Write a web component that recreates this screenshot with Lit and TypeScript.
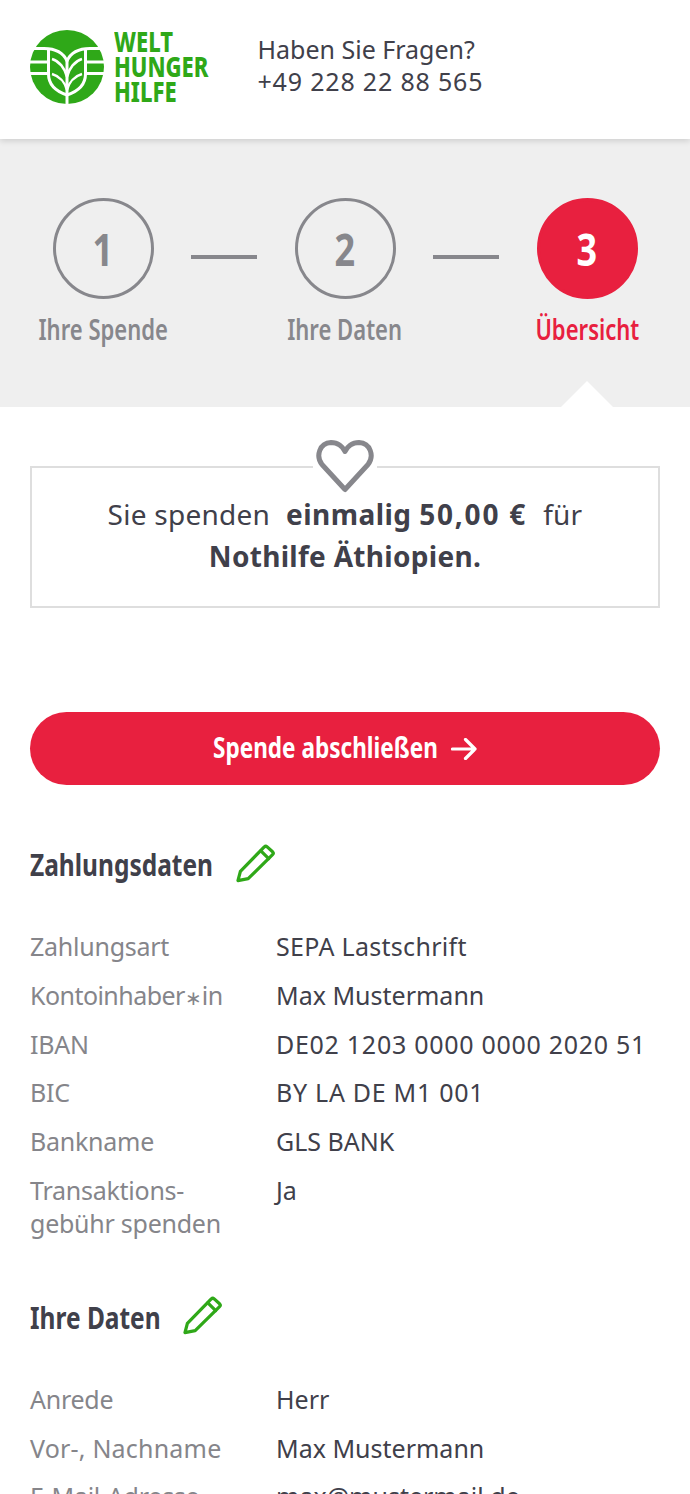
import { LitElement, html, css, svg, TemplateResult } from "lit";
import { customElement } from "lit/decorators.js";

const pencil = html`<svg class="pencil" viewBox="0 0 40 40" fill="none" stroke="#2fa818" stroke-width="3.300" stroke-linejoin="round" stroke-linecap="round">
  <path d="M2 37.500 L4.500 28 L29 3 Q30.500 1.700 32 3 L37.500 8 Q39 9.500 37.500 11 L12.500 35.500 Z"/><path d="M25.500 7 L33.500 15"/>
</svg>`;

const logoMark = svg`
  <circle cx="37" cy="37" r="37" fill="#2fa818"/>
  <g fill="none" stroke="#fff" stroke-width="3">
    <path d="M0 18.500 H14 C24 18.500 33 22 37 31 C41 22 50 18.500 60 18.500 H74"/>
    <path d="M0 32 H18.500 M55.500 32 H74"/>
    <path d="M0 43.500 H18.500 M55.500 43.500 H74"/>
    <path d="M37 74 V30"/>
    <path d="M18.500 18.500 V44 C18.500 56 28 62 37 65 C46 62 55.500 56 55.500 44 V18.500"/>
    <path d="M22 29 C29 31 35 38 37 47 C39 38 45 31 52 29" stroke-width="2.500"/>
    <path d="M22 44 C29 46 35 52 37 60 C39 52 45 46 52 44" stroke-width="2.500"/>
  </g>`;

type Row = [string | TemplateResult, string, string?];

@customElement("app-root")
export class AppRoot extends LitElement {
  static styles = css`
    :host { display: block; width: 690px; height: 1494px; overflow: hidden; background: #fff; font-family: "Noto Sans", sans-serif; color: #40404a; }
    .header { height: 139px; display: flex; align-items: center; padding: 0 0 5px 30px; box-sizing: border-box; box-shadow: 0 2px 6px rgba(0,0,0,.14); position: relative; z-index: 1; background: #fff; }
    .mark { width: 74px; height: 74px; flex: none; }
    .wordmark { margin: -2px 0 0 10px; width: 134px; font-size: 28px; line-height: 25px; font-weight: 800; color: #2fa818; transform: scaleX(.785); transform-origin: left center; }
    .phone { font-size: 25px; line-height: 32px; margin: -4px 0 0 9.500px; white-space: nowrap; }
    .phone .tel { letter-spacing: .82px; }
    .stepper { background: #efefef; height: 268px; position: relative; padding-top: 59px; box-sizing: border-box; display: flex; }
    .steps { display: flex; margin-left: 22px; }
    .step { width: 162px; display: flex; flex-direction: column; align-items: center; color: #87878c; flex: none; }
    .circle { width: 101px; height: 101px; box-sizing: border-box; border-radius: 50%; border: 3.500px solid #87878c; display: flex; align-items: center; justify-content: center; font-size: 45px; line-height: 1; font-weight: 700; }
    .circle span { display: block; transform: scaleX(.8); }
    .label { margin-top: 12px; font-size: 29px; line-height: 36px; font-weight: 600; white-space: nowrap; transform: scaleX(.76); }
    .step.active { color: #e8203f; }
    .step.active .circle { background: #e8203f; border-color: #e8203f; color: #fff; }
    .sep { width: 66px; height: 3.500px; background: #87878c; margin: 57px 7px 0; flex: none; }
    .tri { position: absolute; left: 561px; bottom: 0; width: 0; height: 0; border-left: 26px solid transparent; border-right: 26px solid transparent; border-bottom: 26px solid #fff; }
    .main { padding: 59px 30px 0; }
    .box { position: relative; border: 2px solid #dedede; height: 142px; box-sizing: border-box; text-align: center; font-size: 28px; line-height: 42px; padding-top: 25px; letter-spacing: .25px; }
    .box b { font-weight: 700; margin: 0 8.500px; letter-spacing: .45px; }
    .box b.last { margin: 0; letter-spacing: .3px; }
    .box .amount { letter-spacing: 1.800px; }
    .heart { position: absolute; left: 281px; top: -28px; width: 64px; height: 54px; background: #fff; }
    .heart svg { display: block; width: 58px; height: 54px; margin-left: 3px; }
    .btn { margin-top: 104px; height: 73px; border-radius: 37px; background: #e8203f; color: #fff; display: flex; align-items: center; justify-content: center; gap: 13px; font-size: 28px; font-weight: 700; padding-bottom: 3px; box-sizing: border-box; }
    .btn span { display: block; width: 225px; white-space: nowrap; transform: scaleX(.806); transform-origin: left center; }
    .btn svg { width: 26px; height: 22px; margin-top: 3px; }
    .head { display: flex; align-items: center; gap: 23px; margin-top: 58px; height: 44px; }
    h2 { margin: -2px 0 0; font-size: 31px; font-weight: 700; line-height: 44px; white-space: nowrap; transform: scaleX(.79); transform-origin: left center; }
    h2.pay { width: 183px; }
    h2.you { width: 130px; }
    .pencil { width: 39px; height: 39px; flex: none; margin-top: -4px; }
    .rows { display: grid; grid-template-columns: 246px 1fr; row-gap: 15.750px; margin: 43px 0 0; font-size: 25px; line-height: 33px; }
    .rows dt { color: #85858a; letter-spacing: -.25px; }
    .rows dt.vor { letter-spacing: .2px; }
    .rows dt.kon { letter-spacing: -.55px; }
    .star { font-size: 20px; letter-spacing: 0; line-height: 0; }
    .rows dd { margin: 0; }
    .rows dd.wide { letter-spacing: .72px; }
    .rows dd.sepa { letter-spacing: .3px; }
    .second { margin-top: 56px; }
  `;

  render() {
    const rows1: Row[] = [
      ["Zahlungsart", "SEPA Lastschrift", "sepa"],
      [html`Kontoinhaber<span class="star">∗</span>in`, "Max Mustermann", "kon"],
      ["IBAN", "DE02 1203 0000 0000 2020 51", "wide"],
      ["BIC", "BY LA DE M1 001", "wide"],
      ["Bankname", "GLS BANK"],
    ];
    const rows2: Row[] = [
      ["Anrede", "Herr"],
      ["Vor-, Nachname", "Max Mustermann", "vor"],
      ["E-Mail-Adresse", "max@mustermail.de"],
    ];
    const row = (r: Row) => html`<dt class=${r[2] ?? ""}>${r[0]}</dt><dd class=${r[2] ?? ""}>${r[1]}</dd>`;
    const step = (n: number, label: string, active = false) => html`
      <div class="step ${active ? "active" : ""}"><div class="circle"><span>${n}</span></div><div class="label">${label}</div></div>`;
    return html`
      <div class="header">
        <svg class="mark" viewBox="0 0 74 74">${logoMark}</svg>
        <div class="wordmark">WELT<br />HUNGER<br />HILFE</div>
        <div class="phone">Haben Sie Fragen?<br /><span class="tel">+49 228 22 88 565</span></div>
      </div>
      <div class="stepper">
        <div class="steps">
          ${step(1, "Ihre Spende")}
          <div class="sep"></div>
          ${step(2, "Ihre Daten")}
          <div class="sep"></div>
          ${step(3, "Übersicht", true)}
        </div>
        <div class="tri"></div>
      </div>
      <div class="main">
        <div class="box">
          <div class="heart"><svg viewBox="0 0 58 54" fill="none" stroke="#87878c" stroke-width="5" stroke-linejoin="round"><path d="M29 49.500 L6 24.500 C-0.500 16 3.500 3 15 2.500 C22 2.500 27 7 29 11.500 C31 7 36 2.500 43 2.500 C54.500 3 58.500 16 52 24.500 Z"/></svg></div>
          Sie spenden <b>einmalig <span class="amount">50,00 €</span></b> für<br /><b class="last">Nothilfe Äthiopien.</b>
        </div>
        <div class="btn"><span>Spende abschließen</span>
          <svg viewBox="0 0 26 22" fill="none" stroke="#fff" stroke-width="3.200" stroke-linecap="round" stroke-linejoin="round"><path d="M1.500 11 H24 M14.500 1.500 L24 11 L14.500 20.500"/></svg>
        </div>
        <div class="head"><h2 class="pay">Zahlungsdaten</h2>${pencil}</div>
        <dl class="rows">
          ${rows1.map(row)}
          <dt>Transaktions-<br />gebühr spenden</dt><dd>Ja</dd>
        </dl>
        <div class="head second"><h2 class="you">Ihre Daten</h2>${pencil}</div>
        <dl class="rows">${rows2.map(row)}</dl>
      </div>
    `;
  }
}
